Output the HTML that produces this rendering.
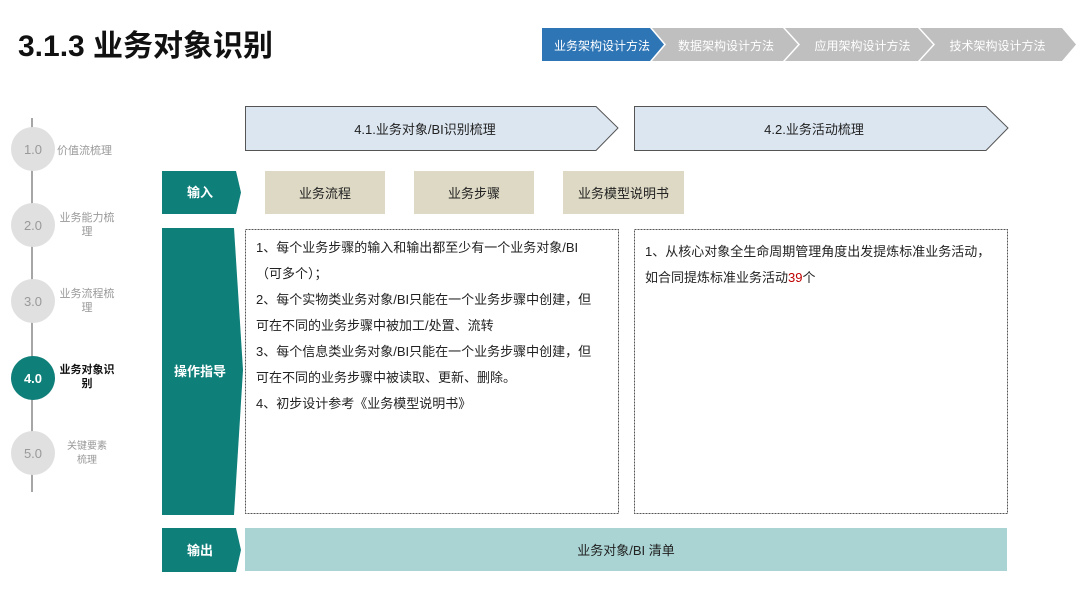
<!DOCTYPE html>
<html><head><meta charset="utf-8"><style>
body{margin:0;width:1080px;height:608px;background:#fff;position:relative;overflow:hidden;font-family:"Liberation Sans","Noto Sans CJK SC",sans-serif}
.a{position:absolute}
.t{font-size:13px;color:#222;line-height:26px}
</style></head><body>
<svg class="a" style="left:0;top:0" width="1080" height="608">
<polygon points="542,28 650,28 664,44.5 650,61 542,61" fill="#2e75b6"/>
<polygon points="652,28 783,28 798,44.5 783,61 652,61 666,44.5" fill="#bfbfbf"/>
<polygon points="785,28 918,28 933,44.5 918,61 785,61 800,44.5" fill="#bfbfbf"/>
<polygon points="920,28 1062,28 1076,44.5 1062,61 920,61 935,44.5" fill="#bfbfbf"/>
<polygon points="245.5,106.5 596,106.5 618,128 596,150.5 245.5,150.5" fill="#dce6f1" stroke="#555"/>
<polygon points="634.5,106.5 986,106.5 1008,128 986,150.5 634.5,150.5" fill="#dce6f1" stroke="#555"/>
<line x1="32" y1="118" x2="32" y2="492" stroke="#a6a6a6" stroke-width="2"/>
<circle cx="33" cy="149" r="22" fill="#e0e0e0"/>
<circle cx="33" cy="225" r="22" fill="#e0e0e0"/>
<circle cx="33" cy="301" r="22" fill="#e0e0e0"/>
<circle cx="33" cy="378" r="22" fill="#0f7f7a"/>
<circle cx="33" cy="453" r="22" fill="#e0e0e0"/>
<polygon points="162,171 236,171 241,192.5 236,214 162,214" fill="#0f7f7a"/>
<polygon points="162,228 234,228 243,370 234,515 162,515" fill="#0f7f7a"/>
<polygon points="162,528 236,528 241,550 236,572 162,572" fill="#0f7f7a"/>
<rect x="265" y="171" width="120" height="43" fill="#ddd9c4"/>
<rect x="414" y="171" width="120" height="43" fill="#ddd9c4"/>
<rect x="563" y="171" width="121" height="43" fill="#ddd9c4"/>
<rect x="245.5" y="229.5" width="373" height="284" fill="none" stroke="#555" stroke-dasharray="2,1"/>
<rect x="634.5" y="229.5" width="373" height="284" fill="none" stroke="#555" stroke-dasharray="2,1"/>
<rect x="245" y="528" width="762" height="43" fill="#a9d4d3"/>
</svg>
<div class="a" style="left:18px;top:21px;font-size:30px;font-weight:bold;color:#111">3.1.3 业务对象识别</div>
<div class="a" style="left:542px;top:37px;width:120px;text-align:center;font-size:12px;color:#fff">业务架构设计方法</div>
<div class="a" style="left:666px;top:37px;width:120px;text-align:center;font-size:12px;color:#fff">数据架构设计方法</div>
<div class="a" style="left:800px;top:37px;width:125px;text-align:center;font-size:12px;color:#fff">应用架构设计方法</div>
<div class="a" style="left:935px;top:37px;width:125px;text-align:center;font-size:12px;color:#fff">技术架构设计方法</div>
<div class="a" style="left:245px;top:119px;width:360px;text-align:center;font-size:13px;color:#222">4.1.业务对象/BI识别梳理</div>
<div class="a" style="left:634px;top:119px;width:360px;text-align:center;font-size:13px;color:#222">4.2.业务活动梳理</div>
<div class="a" style="left:11px;top:142px;width:44px;text-align:center;font-size:13px;color:#999">1.0</div>
<div class="a" style="left:11px;top:218px;width:44px;text-align:center;font-size:13px;color:#999">2.0</div>
<div class="a" style="left:11px;top:294px;width:44px;text-align:center;font-size:13px;color:#999">3.0</div>
<div class="a" style="left:11px;top:371px;width:44px;text-align:center;font-size:13px;color:#fff;font-weight:bold">4.0</div>
<div class="a" style="left:11px;top:446px;width:44px;text-align:center;font-size:13px;color:#999">5.0</div>
<div class="a" style="left:57px;top:142px;font-size:11px;color:#999">价值流梳理</div>
<div class="a" style="left:56px;top:211px;width:62px;text-align:center;font-size:11px;color:#999;line-height:14px">业务能力梳<br>理</div>
<div class="a" style="left:56px;top:287px;width:62px;text-align:center;font-size:11px;color:#999;line-height:14px">业务流程梳<br>理</div>
<div class="a" style="left:56px;top:363px;width:62px;text-align:center;font-size:11px;color:#111;font-weight:bold;line-height:14px">业务对象识<br>别</div>
<div class="a" style="left:56px;top:440px;width:62px;text-align:center;font-size:10px;color:#999;line-height:14px">关键要素<br>梳理</div>
<div class="a" style="left:162px;top:182px;width:76px;text-align:center;font-size:13px;color:#fff;font-weight:bold">输入</div>
<div class="a" style="left:162px;top:361px;width:76px;text-align:center;font-size:13px;color:#fff;font-weight:bold">操作指导</div>
<div class="a" style="left:162px;top:540px;width:76px;text-align:center;font-size:13px;color:#fff;font-weight:bold">输出</div>
<div class="a" style="left:265px;top:183px;width:120px;text-align:center;font-size:13px;color:#222">业务流程</div>
<div class="a" style="left:414px;top:183px;width:120px;text-align:center;font-size:13px;color:#222">业务步骤</div>
<div class="a" style="left:563px;top:183px;width:121px;text-align:center;font-size:13px;color:#222">业务模型说明书</div>
<div class="a t" style="left:256px;top:235px;width:360px">1、每个业务步骤的输入和输出都至少有一个业务对象/BI<br>（可多个）；<br>2、每个实物类业务对象/BI只能在一个业务步骤中创建，但<br>可在不同的业务步骤中被加工/处置、流转<br>3、每个信息类业务对象/BI只能在一个业务步骤中创建，但<br>可在不同的业务步骤中被读取、更新、删除。<br>4、初步设计参考《业务模型说明书》</div>
<div class="a t" style="left:645px;top:239px;width:360px">1、从核心对象全生命周期管理角度出发提炼标准业务活动，<br>如合同提炼标准业务活动<span style="color:#c00000">39</span>个</div>
<div class="a" style="left:245px;top:540px;width:762px;text-align:center;font-size:13px;color:#222">业务对象/BI 清单</div>
</body></html>
